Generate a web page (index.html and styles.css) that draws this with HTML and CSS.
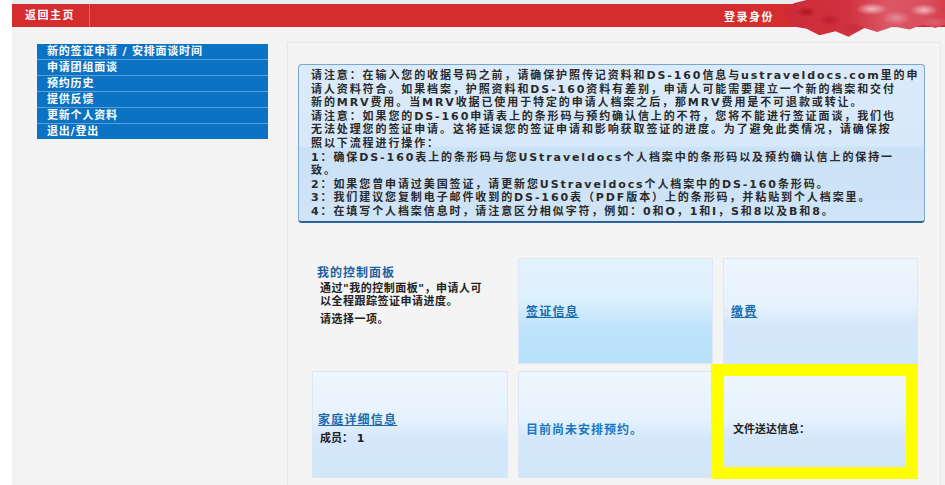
FILE: index.html
```
<!DOCTYPE html>
<html lang="zh-CN">
<head>
  <meta charset="UTF-8" />
  <meta name="viewport" content="width=device-width, initial-scale=1.0"/>
  <title>我的控制面板</title>
  <link rel="stylesheet" href="styles.css">
</head>
<body>
  <div class="page">
    <div class="header">
      <a class="home-link" href="#">返回主页</a>
      <div class="login-as">登录身份</div>
    </div>
    <div class="smear"></div>

    <div class="main">
      <ul class="side-menu">
        <li><a href="#">新的签证申请 / 安排面谈时间</a></li>
        <li><a href="#">申请团组面谈</a></li>
        <li><a href="#">预约历史</a></li>
        <li><a href="#">提供反馈</a></li>
        <li><a href="#">更新个人资料</a></li>
        <li><a href="#">退出/登出</a></li>
      </ul>

      <div class="panel">
        <div class="notice">
          请注意：在输入您的收据号码之前，请确保护照传记资料和DS-160信息与ustraveldocs.com里的申<br>
          请人资料符合。如果档案，护照资料和DS-160资料有差别，申请人可能需要建立一个新的档案和交付<br>
          新的MRV费用。当MRV收据已使用于特定的申请人档案之后，那MRV费用是不可退款或转让。<br>
          请注意：如果您的DS-160申请表上的条形码与预约确认信上的不符，您将不能进行签证面谈，我们也<br>
          无法处理您的签证申请。这将延误您的签证申请和影响获取签证的进度。为了避免此类情况，请确保按<br>
          照以下流程进行操作：<br>
          1：确保DS-160表上的条形码与您UStraveldocs个人档案中的条形码以及预约确认信上的保持一<br>
          致。<br>
          2：如果您曾申请过美国签证，请更新您UStraveldocs个人档案中的DS-160条形码。<br>
          3：我们建议您复制电子邮件收到的DS-160表（PDF版本）上的条形码，并粘贴到个人档案里。<br>
          4：在填写个人档案信息时，请注意区分相似字符，例如：0和O，1和I，S和8以及B和8。
        </div>

        <div class="tiles">
          <div class="intro">
            <div class="intro-title">我的控制面板</div>
            <p>通过"我的控制面板"，申请人可<br>以全程跟踪签证申请进度。</p>
            <p>请选择一项。</p>
          </div>
          <div class="tile tile-strong"><a href="#">签证信息</a></div>
          <div class="tile"><a href="#">缴费</a></div>
          <div class="tile tile-family">
            <a href="#">家庭详细信息</a>
            <div class="members">成员： 1</div>
          </div>
          <div class="tile"><span class="plain-link">目前尚未安排预约。</span></div>
          <div class="tile tile-marked">
            <span class="tile-text">文件送达信息：</span>
            <div class="highlight"></div>
          </div>
        </div>
      </div>
    </div>
  </div>
</body>
</html>
```

FILE: styles.css
```
body {
  margin: 0;
  background: #fff;
  font-family: "DejaVu Sans", "Noto Sans CJK SC", sans-serif;
  overflow: hidden;
}

.page {
  position: relative;
  margin-left: 12px;
  min-height: 485px;
  background: #f3f3f3;
}

.header {
  display: flex;
  align-items: center;
  height: 23px;
  background: #d52c2e;
  border-top: 4px solid #e8ebef;
  box-shadow: 0 -1px 0 #9fa9b6;
}

.home-link {
  display: block;
  height: 23px;
  line-height: 23px;
  padding: 0 14px 0 13px;
  border-right: 1px solid #e46466;
  color: #fff;
  font-weight: bold;
  font-size: 11px;
  letter-spacing: 1.5px;
  text-decoration: none;
}

.login-as {
  margin-left: 634px;
  color: #fff;
  font-weight: bold;
  font-size: 11px;
  letter-spacing: 1.5px;
}

/* redacted user name */
.smear {
  position: absolute;
  left: 772px;
  top: 0;
  width: 161px;
  height: 40px;
  clip-path: polygon(0 30%, 6% 8%, 14% 0, 100% 0, 100% 62%, 94% 70%, 86% 62%, 78% 74%, 68% 66%, 58% 80%, 50% 70%, 40% 92%, 32% 78%, 22% 88%, 14% 72%, 6% 66%, 2% 52%);
  background:
    radial-gradient(ellipse 10px 5px at 22px 12px, #a9141f 0%, rgba(169,20,31,0) 100%),
    radial-gradient(ellipse 12px 6px at 46px 20px, #b81c2a 0%, rgba(184,28,42,0) 100%),
    radial-gradient(ellipse 16px 6px at 88px 9px, #f1bac3 0%, rgba(241,186,195,0) 100%),
    radial-gradient(ellipse 14px 7px at 112px 18px, #e68b98 0%, rgba(230,139,152,0) 100%),
    radial-gradient(ellipse 14px 6px at 140px 10px, #f0b4be 0%, rgba(240,180,190,0) 100%),
    radial-gradient(ellipse 12px 6px at 70px 28px, #c62a39 0%, rgba(198,42,57,0) 100%),
    radial-gradient(ellipse 16px 5px at 150px 22px, #d9606e 0%, rgba(217,96,110,0) 100%),
    linear-gradient(90deg, #cc2a37 0%, #d1323f 40%, #db5866 65%, #d9505f 85%, #d6404e 100%);
}

.main {
  display: flex;
  align-items: flex-start;
}

.side-menu {
  list-style: none;
  margin: 17px 0 0 25px;
  padding: 0;
  width: 231px;
}

.side-menu li {
  background: #0b73c3;
  border-bottom: 1px solid #5b9fd6;
}

.side-menu li:last-child {
  border-bottom: none;
}

.side-menu a {
  display: block;
  height: 15px;
  line-height: 15px;
  padding-left: 10px;
  color: #fff;
  font-weight: bold;
  font-size: 11px;
  letter-spacing: 0.8px;
  text-decoration: none;
}

.panel {
  margin: 15px 0 0 19px;
  width: 652px;
  height: 460px;
  background: #f4f4f4;
  border: 1px solid #e6e6e6;
  border-bottom: none;
}

.notice {
  margin: 21px 0 0 10px;
  width: 613px;
  padding: 4px 0 2px 12px;
  background: linear-gradient(#dcebfa 0%, #d6e8f9 52%, #cbe1f6 53%, #cfe4f7 100%);
  border: 1px solid #7aa6cf;
  border-bottom: 2px solid #2f6195;
  border-radius: 4px;
  color: #2a2a2a;
  font-weight: bold;
  font-size: 11px;
  letter-spacing: 1.9px;
  line-height: 13.6px;
  white-space: nowrap;
}

.tiles {
  display: grid;
  grid-template-columns: 196px 195px 195px;
  grid-template-rows: 106px 107px;
  column-gap: 10px;
  row-gap: 7px;
  margin: 35px 0 0 24px;
}

.intro {
  padding: 5px 0 0 5px;
}

.intro-title {
  color: #1d5f9c;
  font-weight: bold;
  font-size: 12px;
  letter-spacing: 1px;
}

.intro p {
  margin: 2px 0 0 3px;
  color: #222;
  font-weight: bold;
  font-size: 11px;
  letter-spacing: 0.5px;
  line-height: 13px;
}

.intro p + p {
  margin-top: 5px;
}

.tile {
  display: flex;
  flex-direction: column;
  justify-content: center;
  padding-left: 7px;
  background: linear-gradient(#eef6fe 0%, #e6f2fd 45%, #d5e8fb 62%, #d2e6fa 100%);
  border: 1px solid #dbe8f4;
}

.tile-strong {
  background: linear-gradient(#e3f2fd 0%, #dcf0fd 40%, #bfe3fb 65%, #b8e0fb 100%);
}

.tile a {
  color: #1a6aac;
  font-weight: bold;
  font-size: 12px;
  letter-spacing: 1.2px;
}

.tile-family {
  padding-left: 5px;
  padding-top: 6px;
}

.members {
  margin: 2px 0 0 2px;
  color: #222;
  font-weight: bold;
  font-size: 11px;
}

.plain-link {
  color: #1a78c0;
  font-weight: bold;
  font-size: 12px;
  letter-spacing: 1px;
  padding-top: 8px;
}

.tile-marked {
  position: relative;
  padding-left: 9px;
}

.tile-text {
  color: #222;
  font-weight: bold;
  font-size: 11px;
  padding-top: 8px;
}

.highlight {
  position: absolute;
  left: -13px;
  top: -8px;
  width: 183px;
  height: 91px;
  border: 12px solid #ffff00;
}
```
